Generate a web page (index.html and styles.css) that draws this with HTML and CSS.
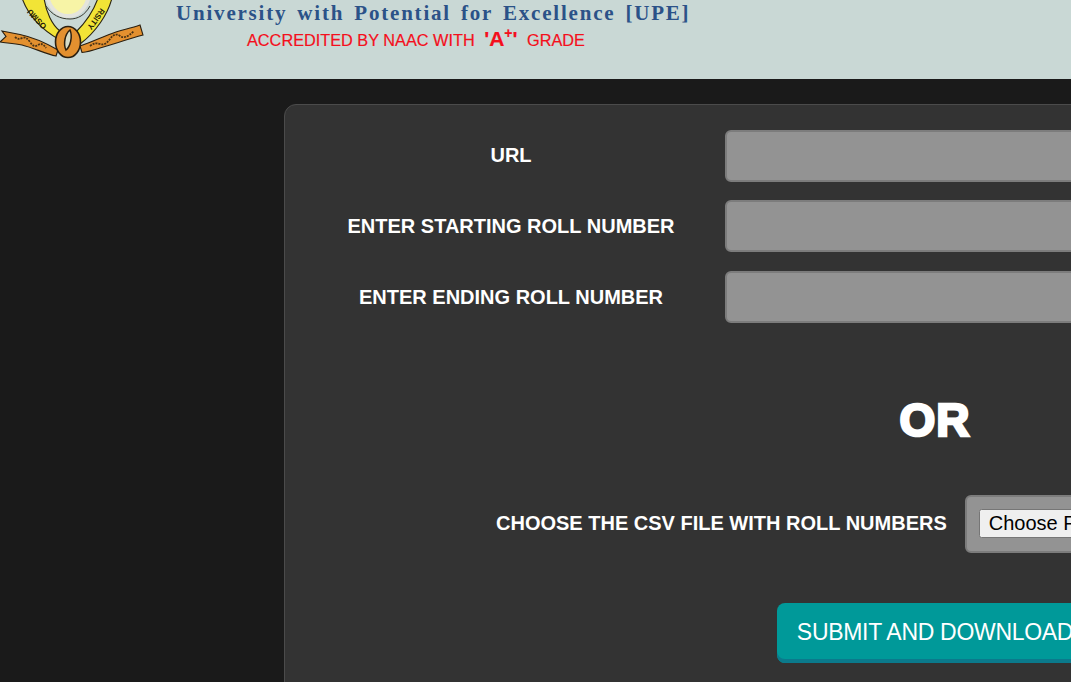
FILE: index.html
```html
<!DOCTYPE html>
<html lang="en">
<head>
<meta charset="utf-8">
<title>Result Download</title>
<link rel="stylesheet" href="styles.css">
</head>
<body>
<header class="banner">
  <svg class="logo" viewBox="0 0 145 60" width="145" height="60" aria-label="University crest">
    <path d="M2 31 L20 34.5 C32 37 46 43 58 50 L56 56 C46 54 34 48 22 45 C14 43.5 7 43 0 42 L6 36.5 Z" fill="#e3902f" stroke="#2a1f10" stroke-width="1.1"/>
    <path d="M140 25 L143 35 C128 39 114 44 100 48 C94 50 88 52 82 52.5 L80 46 C92 42 104 36 116 32 C124 29.5 132 28 140 25 Z" fill="#e3902f" stroke="#2a1f10" stroke-width="1.1"/>
    <path d="M15 37 Q18 40 22 38 T30 42 T38 45 T46 48" fill="none" stroke="#4a3315" stroke-width="1.8" stroke-dasharray="2 1"/>
    <path d="M90 46 Q95 42 100 44 T110 39 T120 36 T134 31" fill="none" stroke="#4a3315" stroke-width="1.8" stroke-dasharray="2 1"/>
    <path d="M22 -2 C28 15 42 30 60 40 L60 31 C52 25 46 12 44 -2 Z" fill="#f2e436" stroke="#2a2412" stroke-width="1.1"/>
    <path d="M112 -2 C108 14 96 32 80 44 L76 32 C86 22 94 10 98 -2 Z" fill="#f2e436" stroke="#2a2412" stroke-width="1.1"/>
    <ellipse cx="68" cy="-8" rx="21" ry="24" fill="#f7f4a6" stroke="#e4e4dc" stroke-width="4"/>
    <path d="M46 6 C52 15 60 19 70 19 C78 19 85 15 90 6" fill="none" stroke="#3a3a30" stroke-width="1"/>
    <text class="crest-text" transform="translate(47 26) rotate(-133)">OSMU</text>
    <text class="crest-text crest-end" transform="translate(87 27) rotate(125.5)">RSITY</text>
    <ellipse cx="68" cy="42" rx="12.5" ry="15.5" fill="#e3902f" stroke="#2a1f10" stroke-width="1.6"/>
    <path d="M70 30 C65 34 63 44 66 50 C70 47 73 37 70 30 Z" fill="#d6dcc8" stroke="#2a1f10" stroke-width="1.5"/>
  </svg>
  <div class="banner-text">
    <p class="motto">University with Potential for Excellence [UPE]</p>
    <p class="accredit">ACCREDITED BY NAAC WITH <b class="grade">'A<sup>+</sup>'</b> GRADE</p>
  </div>
</header>
<main class="page">
  <form class="card">
    <div class="fields">
      <label class="field-label" for="url">URL</label>
      <input class="field-input" id="url" type="text">
      <label class="field-label" for="start">ENTER STARTING ROLL NUMBER</label>
      <input class="field-input" id="start" type="text">
      <label class="field-label" for="end">ENTER ENDING ROLL NUMBER</label>
      <input class="field-input" id="end" type="text">
    </div>
    <h2 class="or">OR</h2>
    <div class="csv-row">
      <label class="csv-label" for="csv">CHOOSE THE CSV FILE WITH ROLL NUMBERS</label>
      <div class="file-box"><input class="file-input" id="csv" type="file"></div>
    </div>
    <div class="actions">
      <button class="submit" type="button">SUBMIT AND DOWNLOAD</button>
    </div>
  </form>
</main>
</body>
</html>
```
FILE: styles.css
```css
* { box-sizing: border-box; }
html, body {
  margin: 0;
  height: 682px;
  overflow: hidden;
  background: #1a1a1a;
  font-family: "Liberation Sans", Arial, sans-serif;
}
.banner {
  height: 79px;
  background: #c9d8d5;
  display: flex;
  align-items: flex-start;
  overflow: hidden;
}
.logo { flex: none; display: block; }
.crest-text { font: bold 8px "Liberation Sans", sans-serif; fill: #1f1a08; }
.crest-end { text-anchor: end; }
.banner-text { margin-left: 31px; white-space: nowrap; }
.motto {
  margin: 0;
  height: 30px;
  font: bold 21px/26px "Liberation Serif", serif;
  letter-spacing: 1.8px;
  word-spacing: 3px;
  color: #2b5288;
}
.accredit {
  margin: -1px 0 0 71px;
  font: 16.3px/20px "Liberation Sans", sans-serif;
  color: #f40f1c;
  -webkit-text-stroke: 0.2px #f40f1c;
}
.grade { font-size: 21px; margin: 0 5px; }
.grade sup { font-size: 14px; line-height: 0; }
.page { padding: 25px 0 0 284px; width: 1700px; }
.card {
  width: 1302px;
  height: 800px;
  background: #333333;
  border: 1px solid #4b4b4b;
  border-radius: 12px;
  padding: 24.5px 0 0 12px;
}
.fields {
  display: grid;
  grid-template-columns: 428px 640px;
  grid-auto-rows: 52px;
  row-gap: 18.75px;
  align-items: center;
}
.field-label {
  color: #fff;
  font-size: 20px;
  font-weight: bold;
  text-align: center;
}
.field-input {
  height: 52px;
  width: 100%;
  background: #939393;
  border: 2px solid #7c7c7c;
  border-radius: 6px;
}
.or {
  margin: 70px 0 0 -12px;
  text-align: center;
  color: #fff;
  font-size: 46px;
  line-height: 54px;
  font-weight: bold;
  letter-spacing: 1px;
  -webkit-text-stroke: 2.6px #fff;
}
.csv-row {
  margin-top: 48px;
  padding-left: 199px;
  display: flex;
  align-items: center;
  gap: 18px;
}
.csv-label {
  padding-bottom: 2px;
  color: #fff;
  font-size: 20px;
  font-weight: bold;
  white-space: nowrap;
}
.file-box {
  width: 420px;
  height: 58px;
  padding: 12px;
  background: #939393;
  border: 2px solid #7c7c7c;
  border-radius: 6px;
}
.file-input { font: 20px "Liberation Sans", sans-serif; color: #fff; display: block; }
.file-input::file-selector-button { padding: 1px 8px; font: inherit; }
.actions { margin: 50px 0 0 -12px; display: flex; justify-content: center; }
.submit {
  width: 316px;
  height: 60px;
  padding: 0 0 1px;
  background: #009999;
  color: #fff;
  border: 0;
  border-radius: 8px;
  box-shadow: inset 0 -4px 0 #0b7a8c;
  font: 23px "Liberation Sans", sans-serif;
  letter-spacing: -0.3px;
  white-space: nowrap;
}
```
